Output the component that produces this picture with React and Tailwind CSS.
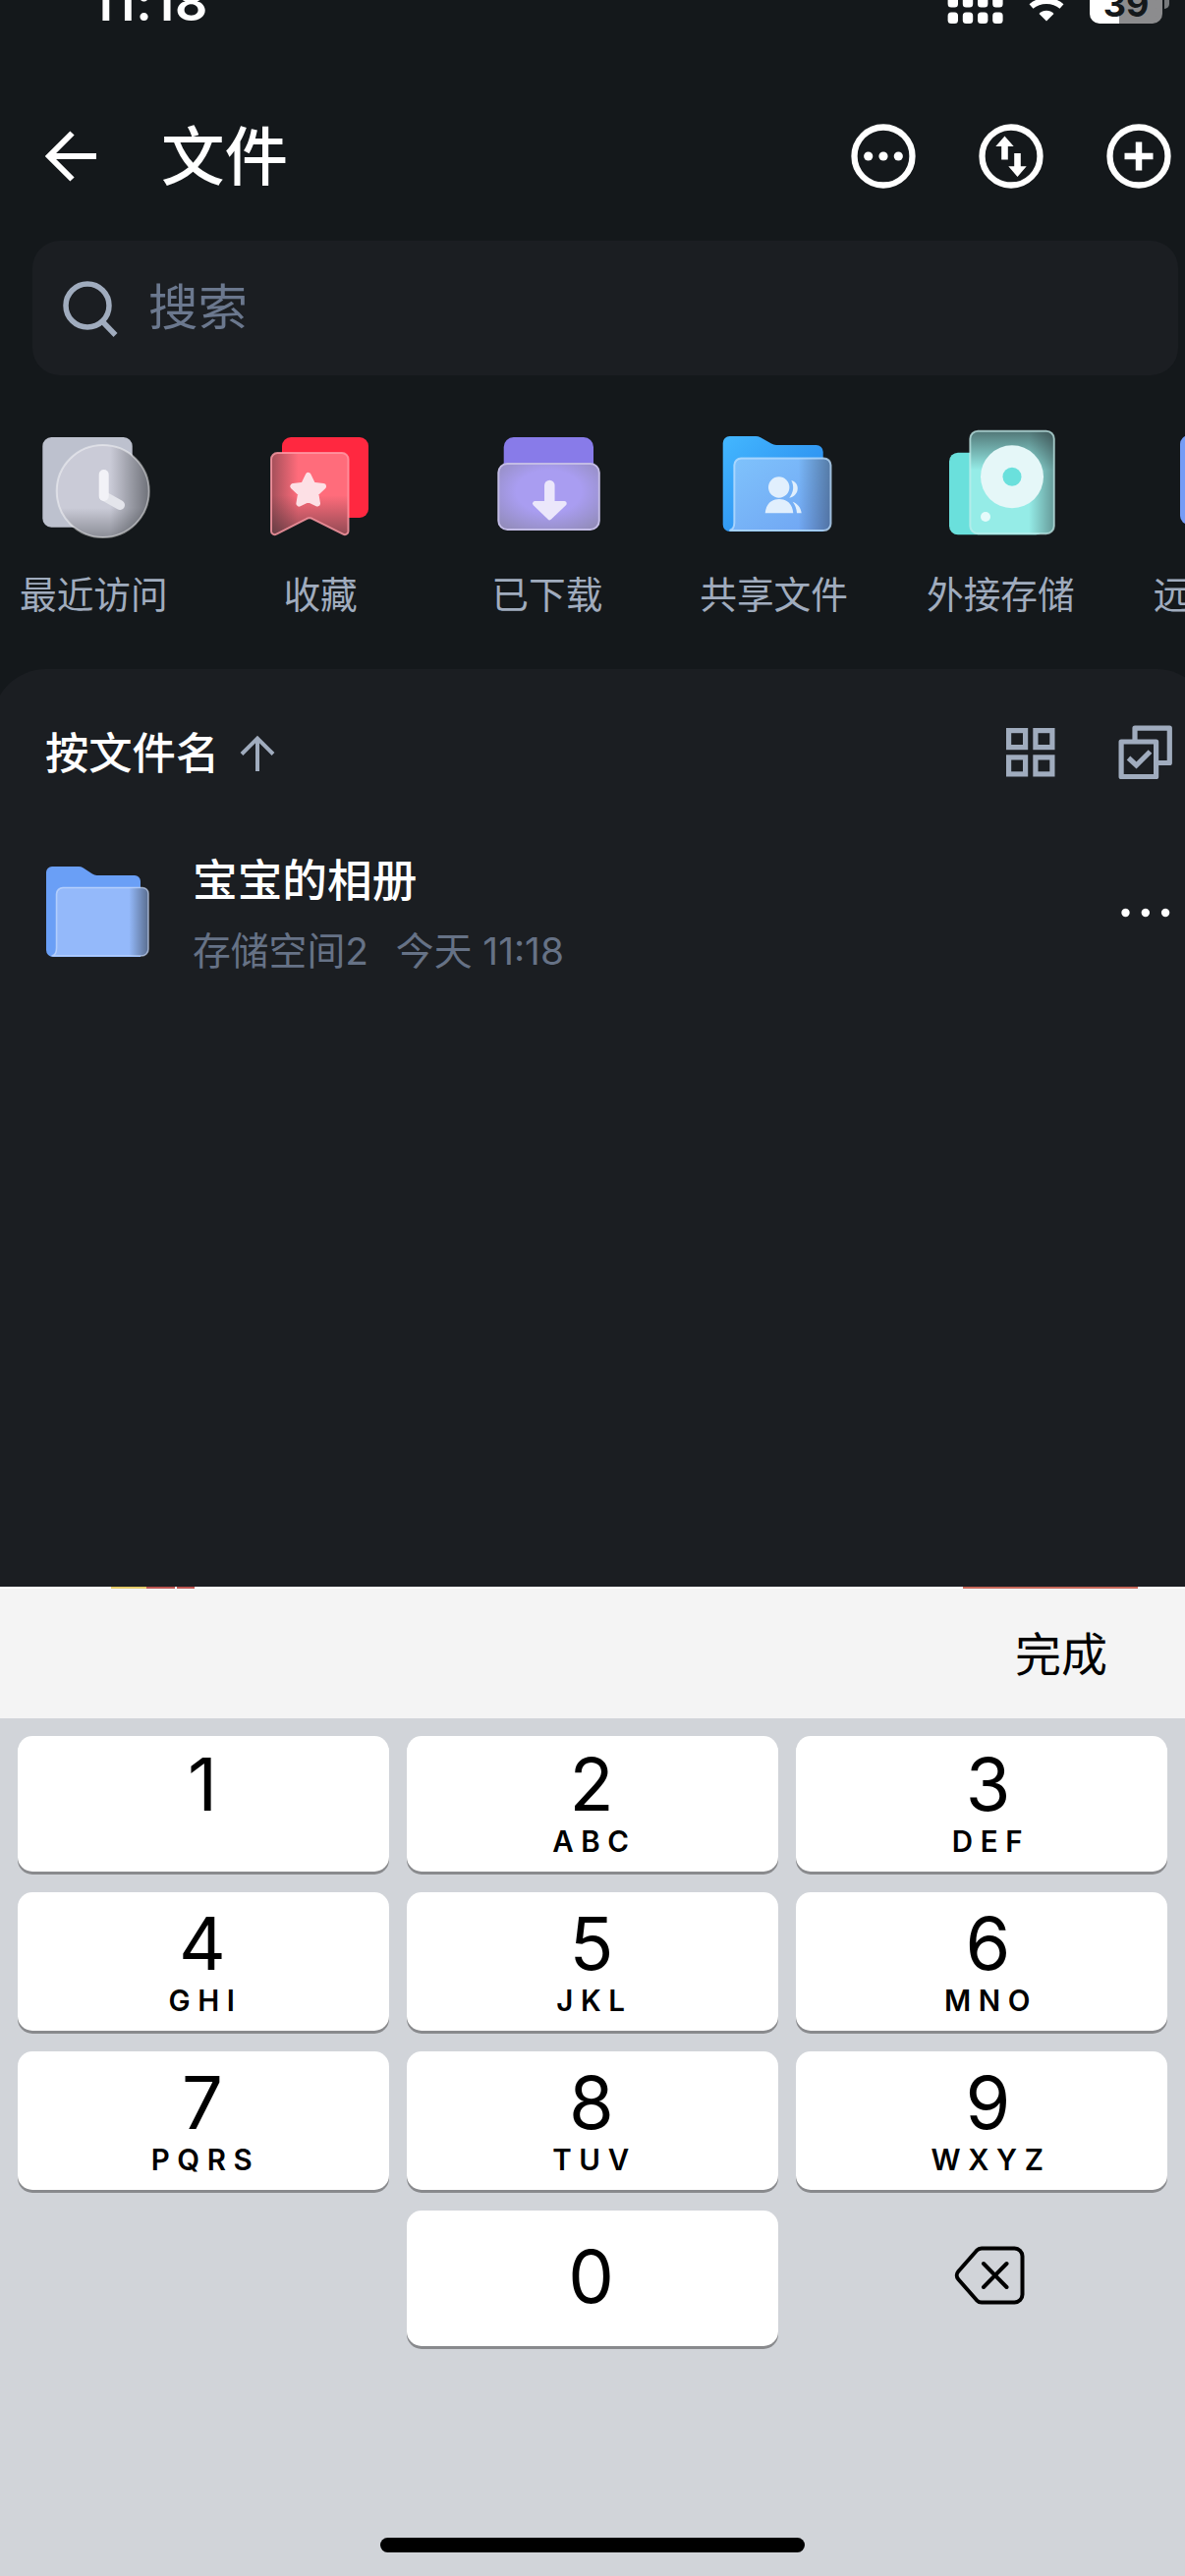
const KEYS = [
  { digit: '1', letters: '' },
  { digit: '2', letters: 'ABC' },
  { digit: '3', letters: 'DEF' },
  { digit: '4', letters: 'GHI' },
  { digit: '5', letters: 'JKL' },
  { digit: '6', letters: 'MNO' },
  { digit: '7', letters: 'PQRS' },
  { digit: '8', letters: 'TUV' },
  { digit: '9', letters: 'WXYZ' },
];

const SHORTCUTS = [
  { label: '最近访问', Icon: RecentIcon },
  { label: '收藏', Icon: FavoriteIcon },
  { label: '已下载', Icon: DownloadIcon },
  { label: '共享文件', Icon: SharedIcon },
  { label: '外接存储', Icon: DriveIcon },
];

// Dark fades used for the frosted front layers
function Shade({ id, x1, y1, x2, y2, from, opacity }) {
  return (
    <linearGradient id={id} x1={x1} y1={y1} x2={x2} y2={y2}>
      <stop offset={from} stopColor="#24282c" stopOpacity="0" />
      <stop offset="1" stopColor="#24282c" stopOpacity={opacity} />
    </linearGradient>
  );
}

function RecentIcon() {
  return (
    <svg width="120" height="130" viewBox="0 0 120 130">
      <defs>
        <Shade id="recent-r" x1="0" y1="0" x2="1" y2="0" from="0.58" opacity="0.55" />
        <Shade id="recent-b" x1="0" y1="0" x2="0" y2="1" from="0.68" opacity="0.38" />
      </defs>
      <rect x="8.3" y="15" width="91.4" height="91.7" rx="9" fill="#bdc1ce" />
      <circle cx="69.7" cy="70" r="47" fill="#cacbd7" />
      <circle cx="69.7" cy="70" r="47" fill="url(#recent-r)" />
      <circle cx="69.7" cy="70" r="47" fill="url(#recent-b)" />
      <circle cx="69.7" cy="70" r="47" fill="none" stroke="#fff" strokeOpacity="0.45" strokeWidth="2" />
      <path d="M71 75L87 84" stroke="#e4e5eb" strokeWidth="10" strokeLinecap="round" />
      <path d="M70.7 53V75" stroke="#f2f2f7" strokeWidth="10" strokeLinecap="round" />
    </svg>
  );
}

function FavoriteIcon() {
  const ribbon =
    'M16.3 31H82a6.5 6.5 0 0 1 6.5 6.5V110.5a3.5 3.5 0 0 1 -5.5 3L52.5 98.3a7 7 0 0 0 -7 0L15.5 113.5a3.5 3.5 0 0 1 -5.5 -3V37.5A6.5 6.5 0 0 1 16.3 31Z';
  return (
    <svg width="120" height="130" viewBox="0 0 120 130">
      <defs>
        <Shade id="fav-l" x1="1" y1="0" x2="0" y2="0" from="0.65" opacity="0.42" />
        <Shade id="fav-b" x1="0" y1="0" x2="0" y2="1" from="0.52" opacity="0.5" />
      </defs>
      <rect x="21" y="15" width="88" height="82" rx="9" fill="#ff2840" />
      <path d={ribbon} fill="#ff6c7b" />
      <path d={ribbon} fill="url(#fav-l)" />
      <path d={ribbon} fill="url(#fav-b)" />
      <path d={ribbon} fill="none" stroke="#ff9ca7" strokeOpacity="0.8" strokeWidth="2" />
      <path
        d="M47.7 54L52.3 63.6L63 65L55.3 72.4L57 82.5L47.7 78L38.4 82.5L40.1 72.4L32.4 65L43.1 63.6Z"
        fill="#fde0e5"
        stroke="#fde0e5"
        strokeWidth="6"
        strokeLinejoin="round"
      />
    </svg>
  );
}

function DownloadIcon() {
  return (
    <svg width="120" height="130" viewBox="0 0 120 130">
      <defs>
        <radialGradient id="dl" cx="0.5" cy="0.42" r="0.72">
          <stop offset="0.45" stopColor="#a99df1" />
          <stop offset="1" stopColor="#918bb8" />
        </radialGradient>
      </defs>
      <rect x="15.7" y="15" width="91.3" height="60" rx="10" fill="#887be9" />
      <rect x="10.3" y="42" width="102.5" height="67" rx="9" fill="url(#dl)" stroke="#c3bce6" strokeWidth="2" />
      <path d="M62.3 64V84" stroke="#ebe7fb" strokeWidth="10.5" strokeLinecap="round" />
      <path
        d="M47.5 82.500H77.2L62.3 96.8Z"
        fill="#ebe7fb"
        stroke="#ebe7fb"
        strokeWidth="5"
        strokeLinejoin="round"
      />
    </svg>
  );
}

function SharedIcon() {
  const front =
    'M26.3 36.5H110.5a7 7 0 0 1 7 7V103a7 7 0 0 1 -7 7H14.5Q19.3 108.5 19.3 102V43.5a7 7 0 0 1 7 -7Z';
  return (
    <svg width="120" height="130" viewBox="0 0 120 130">
      <defs>
        <linearGradient id="share-back" x1="0" y1="0" x2="1" y2="1">
          <stop offset="0" stopColor="#43b7ff" />
          <stop offset="1" stopColor="#2480ea" />
        </linearGradient>
        <linearGradient id="share-front" x1="0" y1="0" x2="1" y2="1">
          <stop offset="0" stopColor="#7fc3fc" />
          <stop offset="1" stopColor="#6fa3f2" />
        </linearGradient>
        <Shade id="share-r" x1="0" y1="0" x2="1" y2="0" from="0.68" opacity="0.4" />
      </defs>
      <path
        d="M14.7 14H41a10 10 0 0 1 5 1.3L57 21.5a10 10 0 0 0 5 1.5H102.7a7 7 0 0 1 7 7V111H14.7a7 7 0 0 1 -7 -7V21a7 7 0 0 1 7 -7Z"
        fill="url(#share-back)"
      />
      <path d={front} fill="url(#share-front)" />
      <path d={front} fill="url(#share-r)" stroke="#bfe0ff" strokeOpacity="0.75" strokeWidth="2" />
      <g fill="#e1effd">
        <circle cx="64.7" cy="66" r="10.7" />
        <path d="M50.7 92.3C51.5 83.5 56.5 78 65 78S78.500 83.5 79.3 92.3Z" />
        <path d="M77.3 59C86.3 61 86.3 74.5 75.3 76.7C79.8 71 80.3 64.5 77.3 59Z" />
        <path d="M78.7 80.7C83.5 82.5 87 86.5 87.7 92.3H83C82.7 87.5 81.2 84 78.7 80.7Z" />
      </g>
    </svg>
  );
}

function DriveIcon() {
  return (
    <svg width="120" height="130" viewBox="0 0 120 130">
      <defs>
        <Shade id="drive-t" x1="0" y1="1" x2="0" y2="0" from="0.62" opacity="0.6" />
        <Shade id="drive-r" x1="0" y1="0" x2="1" y2="0" from="0.7" opacity="0.42" />
      </defs>
      <rect x="8" y="30.7" width="97" height="83.6" rx="9" fill="#6ae0dc" />
      <rect x="29.3" y="8.7" width="85.5" height="104.5" rx="8" fill="#95ece7" />
      <rect x="29.3" y="8.7" width="85.5" height="104.5" rx="8" fill="url(#drive-t)" />
      <rect
        x="29.3"
        y="8.7"
        width="85.5"
        height="104.5"
        rx="8"
        fill="url(#drive-r)"
        stroke="#c6eeec"
        strokeOpacity="0.7"
        strokeWidth="2"
      />
      <circle cx="72" cy="55.3" r="32" fill="#e5f7f8" />
      <circle cx="72" cy="55.3" r="9.5" fill="#6ae0dc" />
      <circle cx="45" cy="96" r="5" fill="#e5fbfb" />
    </svg>
  );
}

function RemoteIcon() {
  return (
    <svg width="120" height="130" viewBox="0 0 120 130">
      <rect x="11" y="13" width="98" height="91" rx="9" fill="#759cf6" />
    </svg>
  );
}

function FolderIcon() {
  const front =
    'M24 32.5H105a6 6 0 0 1 6 6V95a7 7 0 0 1 -7 7H12.5Q17.5 101 17.5 94V39a6.5 6.5 0 0 1 6.5 -6.5Z';
  return (
    <svg width="120" height="110" viewBox="0 0 120 110">
      <defs>
        <Shade id="folder-r" x1="0" y1="0" x2="1" y2="0" from="0.8" opacity="0.52" />
      </defs>
      <path
        d="M13 11H40a8 8 0 0 1 4.5 1.3L54 18.6a8 8 0 0 0 4.5 1.4H97a6 6 0 0 1 6 6V103H14a7 7 0 0 1 -7 -7V17a6 6 0 0 1 6 -6Z"
        fill="#6a9ff6"
      />
      <path d={front} fill="#94b9fa" />
      <path d={front} fill="url(#folder-r)" stroke="#d6e4ff" strokeOpacity="0.6" strokeWidth="1.6" />
    </svg>
  );
}

function StatusBar() {
  return (
    <div className="flex h-20 items-start justify-between overflow-hidden pl-[93px] pr-4 text-white">
      <span className="-mt-[27px] text-[52px] font-semibold leading-[60px] tracking-[0.6px]">11:18</span>
      <div className="flex items-start">
        <svg width="58" height="25" viewBox="0 0 58 25" fill="#fff">
          {[0, 15.2, 30.4, 45.6].map((x) => (
            <g key={x}>
              <rect x={x + 0.6} y="-4" width="10.4" height="11.5" rx="3.5" />
              <rect x={x + 0.6} y="12.5" width="10.4" height="11.5" rx="3.5" />
            </g>
          ))}
        </svg>
        <svg className="ml-[14px]" width="58" height="25" viewBox="0 0 58 25">
          <path d="M29 21.5L21.5 14C25.500 9.7 32.5 9.7 36.5 14Z" fill="#fff" />
          <path d="M13.5 6.5C22 -1 36 -1 44.5 6.5" stroke="#fff" strokeWidth="6" fill="none" />
        </svg>
        <div className="ml-[15px] flex h-[24px] w-[74px] items-end justify-center rounded-b-[10px] bg-linear-to-r from-white from-40% to-[#8c8c8e] to-40%">
          <span className="text-[36px] font-bold leading-[40px] text-[#14181b]">39</span>
        </div>
        <div className="ml-[2px] h-[9px] w-[5px] rounded-br-[5px] bg-[#77797b]" />
      </div>
    </div>
  );
}

function Header() {
  return (
    <div className="flex h-[158px] items-center pl-[42px] pr-[12px] text-white">
      <svg width="60" height="60" viewBox="0 0 60 60" fill="none" stroke="#fff" strokeWidth="6">
        <path d="M56 30H8M31.5 6.5L8 30L31.5 53.5" />
      </svg>
      <h1 className="ml-[62px] mt-[2px] flex-1 text-[64.5px] font-medium leading-none">文件</h1>
      <div className="flex items-center gap-[60px]">
        <svg width="70" height="70" viewBox="0 0 70 70" fill="#fff">
          <circle cx="35" cy="35" r="29.5" fill="none" stroke="#fff" strokeWidth="6.3" />
          <circle cx="19.7" cy="35" r="4.6" />
          <circle cx="35" cy="35" r="4.6" />
          <circle cx="50.3" cy="35" r="4.6" />
        </svg>
        <svg width="70" height="70" viewBox="0 0 70 70" fill="#fff">
          <circle cx="35" cy="35" r="29.5" fill="none" stroke="#fff" strokeWidth="6.3" />
          <path d="M28.5 14.5L37.7 25H31.8V38.5H25.2V25H19.3Z" />
          <path d="M41.5 56L50.7 45.2H44.8V32H38.2V45.2H32.3Z" />
        </svg>
        <svg width="70" height="70" viewBox="0 0 70 70" fill="none" stroke="#fff">
          <circle cx="35" cy="35" r="29.5" strokeWidth="6.3" />
          <path d="M35 20.5V49.5M20.5 35H49.5" strokeWidth="6.5" />
        </svg>
      </div>
    </div>
  );
}

function SearchBar() {
  return (
    <div className="ml-[33px] mr-[7px] mt-[7px] flex h-[137px] items-center rounded-[28px] bg-[#1b1e22] pl-[27px]">
      <svg width="60" height="60" viewBox="0 0 60 60" fill="none" stroke="#a0acbe" strokeWidth="5.5">
        <circle cx="29" cy="27" r="22" />
        <path d="M44 43L57.5 57" />
      </svg>
      <span className="ml-[31px] text-[50.5px] leading-none text-[#6b788e]">搜索</span>
    </div>
  );
}

function Shortcuts() {
  return (
    <div className="-ml-5 flex h-[299px] pt-[48px]">
      {SHORTCUTS.map(({ label, Icon }) => (
        <div key={label} className="flex w-[230.75px] shrink-0 flex-col items-center">
          <Icon />
          <span className="mt-[21px] text-[37.7px] leading-[48px] text-[#a0acbe]">{label}</span>
        </div>
      ))}
      <div className="flex w-[170px] shrink-0 flex-col pl-[56px]">
        <RemoteIcon />
        <span className="-ml-[16px] mt-[21px] text-[37.7px] leading-[48px] text-[#a0acbe]">远</span>
      </div>
    </div>
  );
}

function FileList() {
  return (
    <div className="-ml-[8px] -mr-[26px] h-[934px] rounded-t-[55px] bg-[#1b1e22] pl-[48px] pr-[26px]">
      {/* Sort bar */}
      <div className="flex h-[170px] items-center pl-[6px] pr-[12px]">
        <span className="mt-[2px] text-[44.3px] font-medium leading-none text-white">按文件名</span>
        <svg className="ml-[17px]" width="44" height="44" viewBox="0 0 44 44" fill="none" stroke="#a0acbe" strokeWidth="4">
          <path d="M22 41V7M6 23.5L22 7.500L38 23.5" />
        </svg>
        <div className="ml-auto flex items-center gap-[63px]">
          <svg width="52" height="52" viewBox="0 0 52 52" fill="none" stroke="#a0acbe" strokeWidth="5.2">
            <rect x="3.6" y="3.6" width="17" height="17" />
            <rect x="30.9" y="3.6" width="17" height="17" />
            <rect x="3.6" y="30.9" width="17" height="17" />
            <rect x="30.9" y="30.9" width="17" height="17" />
          </svg>
          <svg width="56" height="56" viewBox="0 0 56 56" fill="none" stroke="#a0acbe" strokeWidth="5.2" strokeLinejoin="round">
            <rect x="3.1" y="17" width="35.5" height="35.5" />
            <path d="M17 15V3.2H52.3V38.5H41" />
            <path d="M10.5 33.5L18.5 41L32.5 27" strokeLinejoin="miter" />
          </svg>
        </div>
      </div>

      {/* File row */}
      <div className="flex h-[156px] items-center pr-[14px]">
        <div className="-mt-[6px]">
          <FolderIcon />
        </div>
        <div className="ml-[36px] mt-[4px] flex flex-col">
          <span className="text-[45.7px] font-medium leading-[60px] text-white">宝宝的相册</span>
          <div className="mt-[14px] flex gap-[28px] text-[38.8px] leading-[54px] text-[#667286]">
            <span>存储空间2</span>
            <span>今天 11:18</span>
          </div>
        </div>
        <svg className="ml-auto" width="52" height="12" viewBox="0 0 52 12" fill="#fff">
          <circle cx="5.5" cy="6" r="4.2" />
          <circle cx="25.8" cy="6" r="4.2" />
          <circle cx="46.1" cy="6" r="4.2" />
        </svg>
      </div>
    </div>
  );
}

function KeyboardToolbar() {
  return (
    <div className="bg-[#f4f4f4] text-black">
      {/* Slivers of the content hidden behind the toolbar */}
      <div className="flex h-[2px] bg-white pl-[113px] pr-[48px]">
        <div className="w-9 bg-[#e5cb6a]" />
        <div className="w-[29px] bg-[#bb5450]" />
        <div className="ml-[2px] w-[18px] bg-[#bb5450]" />
        <div className="ml-auto w-[178px] bg-[#c8695b]" />
      </div>
      <div className="flex h-[132px] items-center justify-end pr-[79px]">
        <span className="text-[47px] leading-none">完成</span>
      </div>
    </div>
  );
}

function Keypad() {
  return (
    <div className="flex h-[873px] flex-col bg-[#d1d4d9] px-[18px] pt-[18px] text-black">
      <div className="grid grid-cols-3 grid-rows-[138px_141px_141px_138px] gap-x-[18px] gap-y-[21px]">
        {KEYS.map(({ digit, letters }) => (
          <div
            key={digit}
            className="flex flex-col items-center justify-end rounded-[15px] bg-white pb-[15px] shadow-[0_3px_0_#898a8d] [&:nth-child(3n)]:pl-[15px]"
          >
            <span className="mb-[6px] mr-[2px] text-[74px] leading-[72px]">{digit}</span>
            <span className="mr-[-4px] h-[32px] text-[29.5px] font-semibold leading-[32px] tracking-[7.6px]">{letters}</span>
          </div>
        ))}
        <div className="col-start-2 flex items-center justify-center rounded-[15px] bg-white pb-[4px] shadow-[0_3px_0_#898a8d]">
          <span className="mr-[3px] text-[74px] leading-none">0</span>
        </div>
        <div className="flex items-center justify-center pb-[6px] pl-[15px]">
          <svg width="72" height="60" viewBox="0 0 72 60" fill="none" stroke="#000" strokeWidth="4" strokeLinecap="round" strokeLinejoin="round">
            <path d="M28 2.5H61.5a8 8 0 0 1 8 8V49.5a8 8 0 0 1 -8 8H28a7 7 0 0 1 -5 -2.2L4.3 34a6 6 0 0 1 0 -8L23 4.7a7 7 0 0 1 5 -2.2Z" />
            <path d="M30 18L53.5 42M53.5 18L30 42" />
          </svg>
        </div>
      </div>
      <div className="mx-auto mb-6 mt-auto h-[15px] w-[432px] rounded-full bg-black" />
    </div>
  );
}

export default function App() {
  return (
    <div className="h-[2622px] w-[1206px] overflow-hidden bg-[#14181b] font-['Inter','Noto_Sans_CJK_SC',sans-serif]">
      <StatusBar />
      <Header />
      <SearchBar />
      <Shortcuts />
      <FileList />
      <KeyboardToolbar />
      <Keypad />
    </div>
  );
}
